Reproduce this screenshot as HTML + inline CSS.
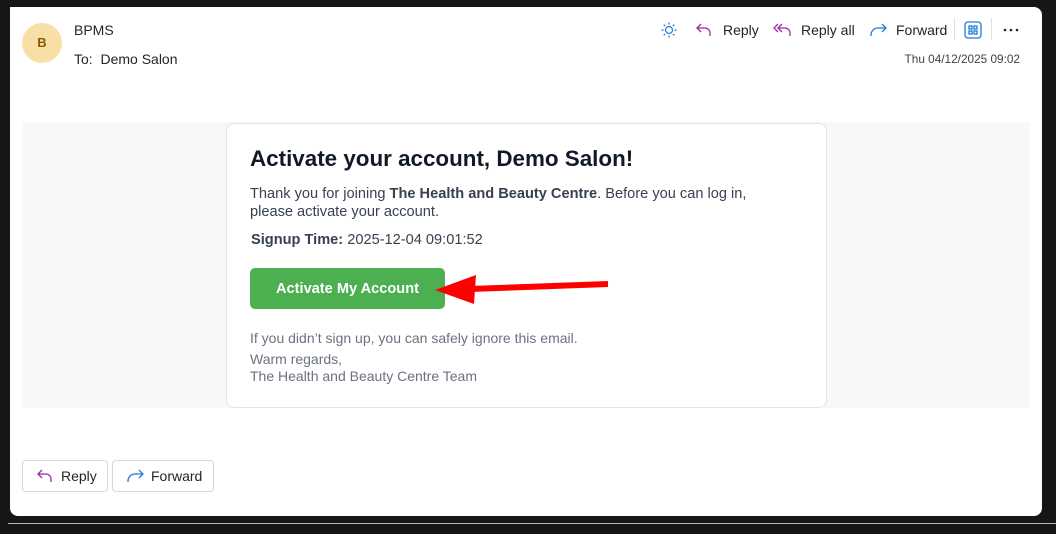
<!DOCTYPE html>
<html><head><meta charset="utf-8"><style>
*{margin:0;padding:0;box-sizing:border-box}
body{width:1056px;height:534px;background:#161616;position:relative;overflow:hidden;font-family:"Liberation Sans",sans-serif}
.panel{position:absolute;left:10px;top:7px;width:1032px;height:509px;background:#fff;border-radius:0 8px 8px 8px}
.line{position:absolute;left:8px;top:523px;width:1048px;height:1px;background:#bbb}
.abs{position:absolute}
.ui{font-family:"Liberation Sans",sans-serif;font-size:14px;color:#242424;white-space:nowrap}
.band{position:absolute;left:22px;top:122px;width:1008px;height:286px;background:#f8f8f8}
.card{position:absolute;left:226px;top:123px;width:601px;height:285px;background:#fff;border:1px solid #e3e3e3;border-radius:8px}
.btn2{position:absolute;top:460px;height:32px;border:1px solid #d6d6d6;border-radius:4px;background:#fff}
</style></head><body>
<div class="panel"></div>
<div class="line"></div>
<div class="abs" style="left:22px;top:23px;width:40px;height:40px;border-radius:50%;background:#f8dfa6;color:#8a5a00;font-size:13px;font-weight:bold;text-align:center;line-height:40px">B</div>
<div class="abs ui" style="left:74px;top:22px">BPMS</div>
<div class="abs ui" style="left:74px;top:51px">To:&nbsp; Demo Salon</div>

<svg class="abs" style="left:660px;top:21px" width="18" height="18" viewBox="0 0 18 18" fill="none" stroke="#1f7ad8" stroke-width="1.2"><circle cx="9" cy="9" r="3.5"/><path d="M9 1.5v2M9 14.5v2M1.5 9h2M14.5 9h2M3.7 3.7l1.4 1.4M12.9 12.9l1.4 1.4M3.7 14.3l1.4-1.4M12.9 5.1l1.4-1.4"/></svg>
<svg class="abs" style="left:695px;top:21px" width="18" height="18" viewBox="0 0 18 18" fill="none" stroke="#9b2ca6" stroke-width="1.3"><path d="M6 3L2 7l4 4M2 7h8a5 5 0 015 5v3"/></svg>
<div class="abs ui" style="left:723px;top:22px">Reply</div>
<svg class="abs" style="left:773px;top:21px" width="20" height="18" viewBox="0 0 20 18" fill="none" stroke="#9b2ca6" stroke-width="1.3"><path d="M5 3L1 7l4 4M9 3L5 7l4 4M5 7h7a5 5 0 015 5v3"/></svg>
<div class="abs ui" style="left:801px;top:22px">Reply all</div>
<svg class="abs" style="left:868px;top:21px" width="20" height="18" viewBox="0 0 20 18" fill="none" stroke="#1f7ad8" stroke-width="1.3"><path d="M14 3l4 4-4 4M18 7H10a7 7 0 00-7 7v1"/></svg>
<div class="abs ui" style="left:896px;top:22px">Forward</div>
<div class="abs" style="left:954px;top:18px;width:1px;height:22px;background:#e0e0e0"></div>
<svg class="abs" style="left:964px;top:21px" width="18" height="18" viewBox="0 0 18 18" fill="none" stroke="#1f7ad8" stroke-width="1.3"><rect x="1" y="1" width="16" height="16" rx="3"/><rect x="5" y="5" width="3" height="3"/><rect x="10" y="5" width="3" height="3"/><rect x="5" y="10" width="3" height="3"/><rect x="10" y="10" width="3" height="3"/></svg>
<div class="abs" style="left:991px;top:18px;width:1px;height:22px;background:#e0e0e0"></div>
<svg class="abs" style="left:1003px;top:28px" width="16" height="4" viewBox="0 0 16 4" fill="#242424"><circle cx="2" cy="2" r="1.3"/><circle cx="8" cy="2" r="1.3"/><circle cx="14" cy="2" r="1.3"/></svg>
<div class="abs ui" style="right:36px;top:52px;font-size:11.8px;color:#424242">Thu 04/12/2025 09:02</div>

<div class="band"></div>
<div class="card"></div>
<div class="abs" style="left:250px;top:146px;font-size:22.4px;font-weight:bold;color:#111827;white-space:nowrap">Activate your account, Demo Salon!</div>
<div class="abs" style="left:250px;top:185px;font-size:14.6px;color:#374151;line-height:18px;width:525px">Thank you for joining <b>The Health and Beauty Centre</b>. Before you can log in, please activate your account.</div>
<div class="abs" style="left:251px;top:232px;font-size:14.6px;color:#374151;white-space:nowrap"><b>Signup Time:</b> 2025-12-04 09:01:52</div>
<div class="abs" style="left:250px;top:268px;width:195px;height:41px;background:#4caf50;border-radius:5px;color:#fff;font-weight:bold;font-size:14.6px;text-align:center;line-height:42px">Activate My Account</div>
<svg class="abs" style="left:430px;top:270px" width="185" height="40" viewBox="0 0 185 40"><path d="M178 14L40 19" stroke="#f00" stroke-width="6"/><path d="M5 20L46 5L44 34Z" fill="#f00"/></svg>
<div class="abs" style="left:250px;top:330px;font-size:14px;color:#6b7280;white-space:nowrap">If you didn’t sign up, you can safely ignore this email.</div>
<div class="abs" style="left:250px;top:351px;font-size:14px;color:#6b7280;line-height:17px">Warm regards,<br>The Health and Beauty Centre Team</div>

<div class="btn2" style="left:22px;width:86px"></div>
<svg class="abs" style="left:36px;top:467px" width="18" height="18" viewBox="0 0 18 18" fill="none" stroke="#9b2ca6" stroke-width="1.3"><path d="M6 3L2 7l4 4M2 7h8a5 5 0 015 5v3"/></svg>
<div class="abs ui" style="left:61px;top:468px">Reply</div>
<div class="btn2" style="left:112px;width:102px"></div>
<svg class="abs" style="left:125px;top:467px" width="20" height="18" viewBox="0 0 20 18" fill="none" stroke="#1f7ad8" stroke-width="1.3"><path d="M14 3l4 4-4 4M18 7H10a7 7 0 00-7 7v1"/></svg>
<div class="abs ui" style="left:151px;top:468px">Forward</div>
</body></html>
